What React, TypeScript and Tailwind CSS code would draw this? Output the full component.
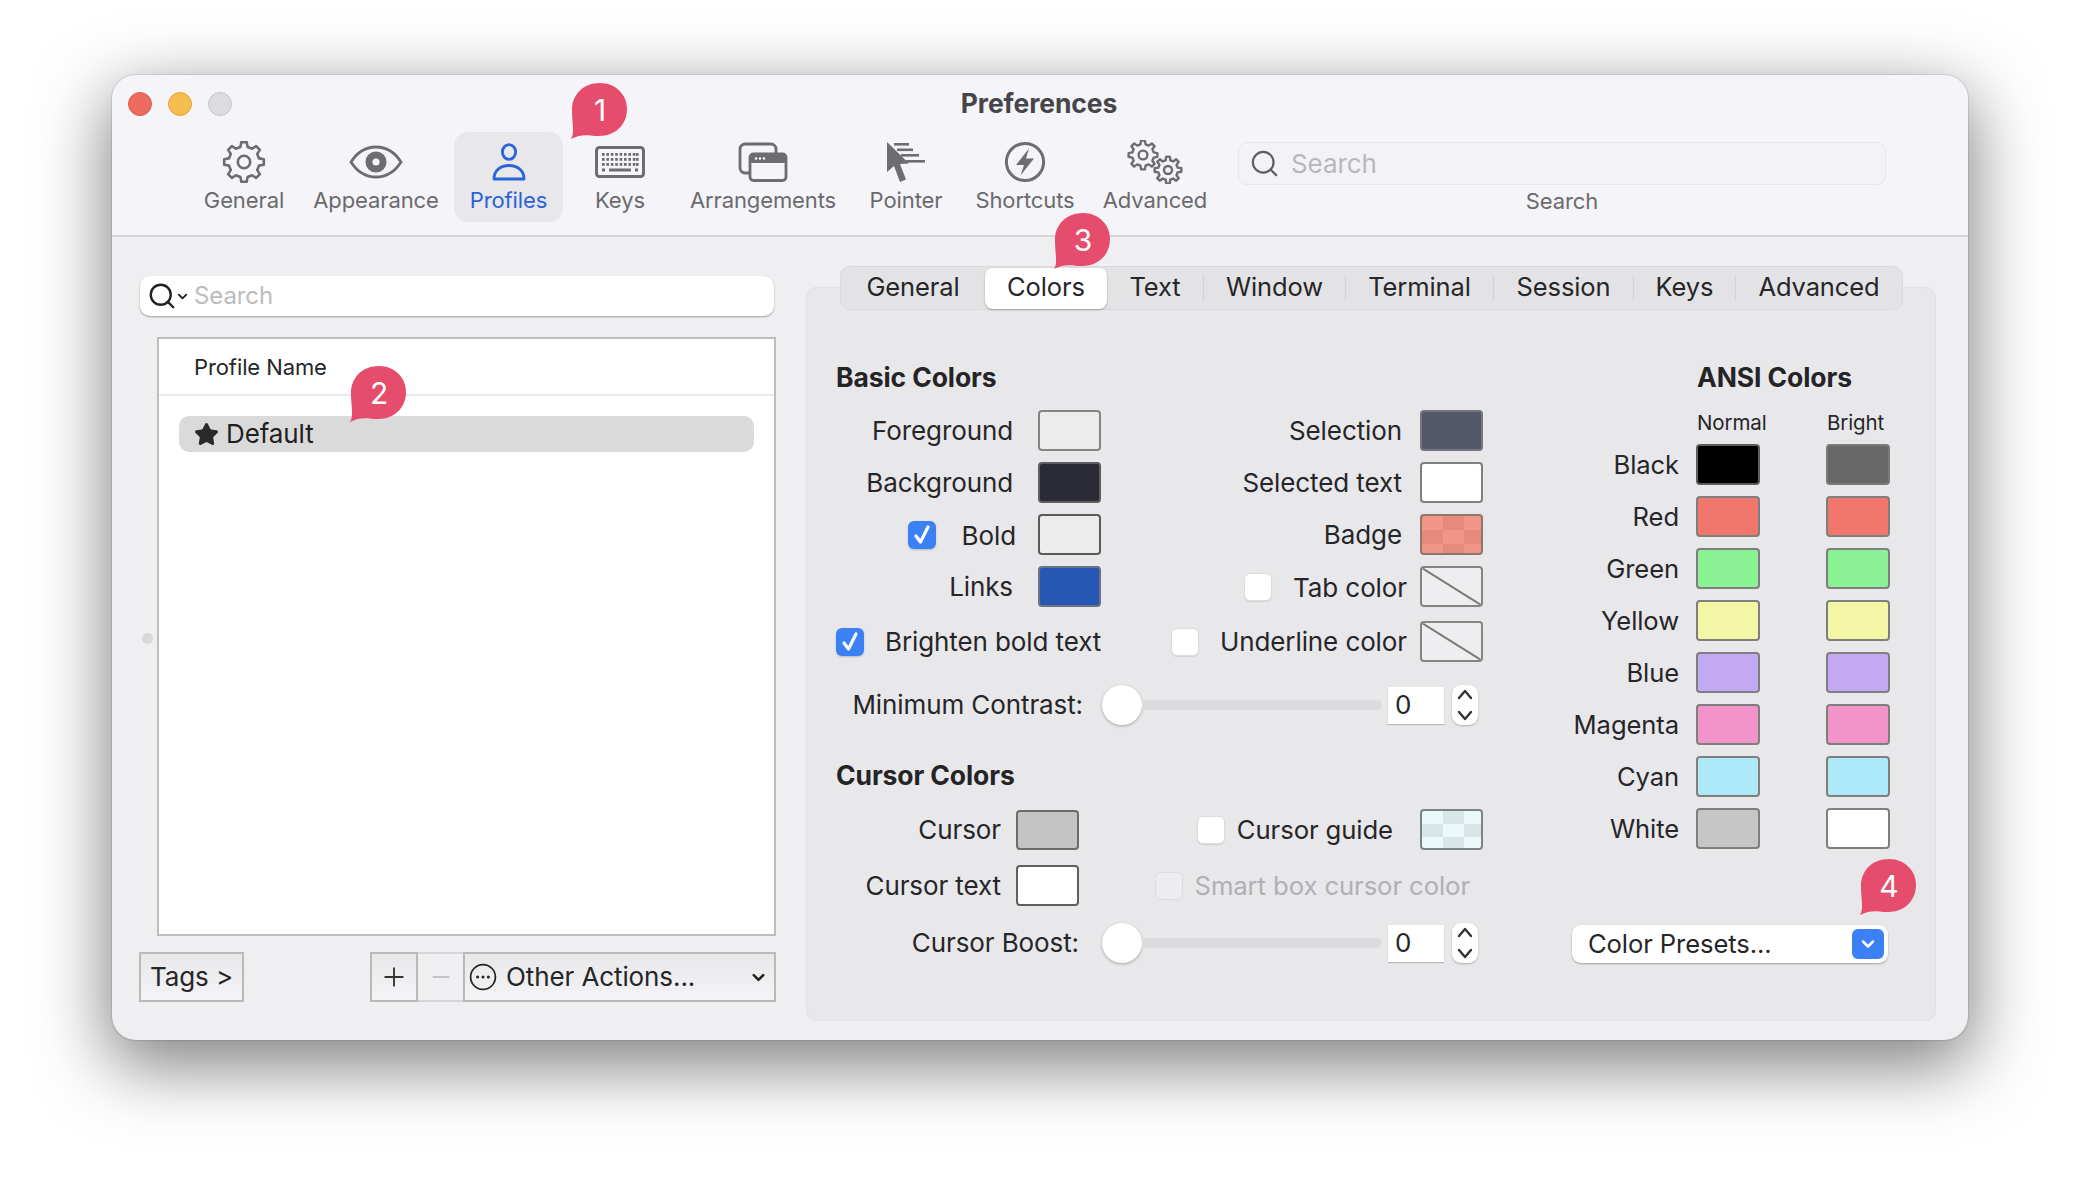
import React from "react";
import { ChevronDown, Minus, Plus, Search, Star } from "lucide-react";

function gearPath(cx: number, cy: number, R: number, r: number, n: number) {
  const pts: string[] = [];
  const step = (2 * Math.PI) / n;
  for (let i = 0; i < n; i++) {
    const a = i * step;
    const p = (rad: number, t: number) =>
      `${(cx + rad * Math.cos(t)).toFixed(2)} ${(cy + rad * Math.sin(t)).toFixed(2)}`;
    pts.push(p(r, a - step * 0.3), p(R, a - step * 0.17), p(R, a + step * 0.17), p(r, a + step * 0.3));
  }
  return "M" + pts.join("L") + "Z";
}

const GREY = "#6d6d70";

const GearIcon = () => (
  <svg width="44" height="42" viewBox="0 0 44 42" fill="none" stroke={GREY} strokeWidth="2.6" strokeLinejoin="round">
    <path d={gearPath(22, 21, 20, 15.5, 8)} />
    <circle cx="22" cy="21" r="6.2" />
  </svg>
);
const EyeIcon = () => (
  <svg width="54" height="34" viewBox="0 0 54 34" fill="none">
    <path d="M2 17C9 6 18 2 27 2C36 2 45 6 52 17C45 28 36 32 27 32C18 32 9 28 2 17Z" stroke={GREY} strokeWidth="2.8" />
    <circle cx="27" cy="17" r="10.5" fill={GREY} />
    <circle cx="27" cy="17" r="3.6" fill="#f5f4f8" />
  </svg>
);
const PersonIcon = () => (
  <svg width="34" height="38" viewBox="0 0 34 38" fill="none" stroke="#2b63d9" strokeWidth="2.8" strokeLinejoin="round">
    <ellipse cx="17" cy="9" rx="6.6" ry="7.4" />
    <path d="M2 36C2 27 9 22.5 17 22.5C25 22.5 32 27 32 36Z" />
  </svg>
);
const KeyboardIcon = () => (
  <svg width="50" height="32" viewBox="0 0 50 32" fill="none">
    <rect x="1.5" y="1.5" width="47" height="29" rx="3" stroke={GREY} strokeWidth="3" />
    {[7, 12, 17].map((y) =>
      [7, 11.4, 15.8, 20.2, 24.6, 29, 33.4, 37.8, 41].map((x) => (
        <rect key={`${x}-${y}`} x={x} y={y} width="2.6" height="2.8" fill={GREY} />
      )),
    )}
    <rect x="14" y="22.5" width="22" height="3" fill={GREY} />
    <rect x="7" y="22.5" width="3" height="3" fill={GREY} />
    <rect x="40" y="22.5" width="3" height="3" fill={GREY} />
  </svg>
);
const ArrangeIcon = () => (
  <svg width="50" height="40" viewBox="0 0 50 40" fill="none">
    <rect x="2" y="2" width="36" height="29" rx="5" stroke={GREY} strokeWidth="2.8" />
    <rect x="12" y="12" width="36" height="26.5" rx="3.5" fill="#f5f4f8" stroke={GREY} strokeWidth="2.8" />
    <path d="M12 15.5C12 13.5 13.5 12 15.5 12H44.5C46.5 12 48 13.5 48 15.5V21H12Z" fill={GREY} />
    <circle cx="18" cy="16.5" r="1.2" fill="#fff" />
    <circle cx="22" cy="16.5" r="1.2" fill="#fff" />
    <circle cx="26" cy="16.5" r="1.2" fill="#fff" />
  </svg>
);
const PointerIcon = () => (
  <svg width="40" height="42" viewBox="0 0 40 42" fill={GREY}>
    <path d="M1 1L1 31L8 25L14 41L20 38.5L14 23L23 22.5Z" />
    <rect x="8" y="2" width="15" height="2.6" />
    <rect x="11" y="7.5" width="16" height="2.6" />
    <rect x="15" y="13" width="18" height="2.6" />
    <rect x="20" y="19" width="19" height="2.6" />
  </svg>
);
const BoltIcon = () => (
  <svg width="42" height="42" viewBox="0 0 42 42" fill="none">
    <circle cx="21" cy="21" r="18.6" stroke={GREY} strokeWidth="3" />
    <path d="M25 7.5L12 24H20L16.5 34.5L30 17.5H22Z" fill={GREY} />
  </svg>
);
const GearsIcon = () => (
  <svg width="56" height="44" viewBox="0 0 56 44" fill="none" stroke={GREY} strokeWidth="2.4" strokeLinejoin="round">
    <path d={gearPath(16, 15, 14.5, 11, 8)} />
    <circle cx="16" cy="15" r="4.4" />
    <path d={gearPath(41, 30, 13.5, 10, 8)} />
    <circle cx="41" cy="30" r="4" />
  </svg>
);

const ToolItem = ({ label, icon, cls, active }: { label: string; icon: React.ReactNode; cls: string; active?: boolean }) => (
  <div
    className={`flex h-[90px] flex-col items-center ${cls} ${active ? "rounded-[14px] bg-[#e8e7ea] text-[#2b63d9]" : "text-[#6a6a6d]"}`}
  >
    <div className="flex h-[56px] items-center justify-center pt-1">{icon}</div>
    <div className="text-[22px] leading-[24px] whitespace-nowrap">{label}</div>
  </div>
);

const Bubble = ({ n, cls }: { n: string; cls: string }) => (
  <div className={`absolute flex h-[58px] w-[58px] items-center justify-center text-[30px] text-white ${cls}`}>
    <svg className="absolute inset-0" width="58" height="58" viewBox="0 0 58 58">
      <path
        d="M1 57C5 51 2 42 2 28C2 12 14 1 30 1C45 1 57 12 57 27C57 43 45 54 29 54C20 54 12 51 1 57Z"
        fill="#e64c6b"
      />
    </svg>
    <span className="relative ml-[2px] mb-[3px]">{n}</span>
  </div>
);

const Swatch = ({ cls, w = "w-[63px]", h = "h-[41px]", none }: { cls: string; w?: string; h?: string; none?: boolean }) => (
  <div className={`relative shrink-0 overflow-hidden rounded-[4px] border-2 ${w} ${h} ${cls}`}>
    {none && (
      <svg className="h-full w-full" viewBox="0 0 100 100" preserveAspectRatio="none">
        <line x1="0" y1="0" x2="100" y2="100" stroke="#7c7c7c" strokeWidth="2" vectorEffect="non-scaling-stroke" />
      </svg>
    )}
  </div>
);

const Check = ({ on, disabled }: { on?: boolean; disabled?: boolean }) =>
  on ? (
    <div className="flex h-[28px] w-[28px] shrink-0 items-center justify-center rounded-[6px] bg-[#3b80f5] shadow-[0_1px_2px_rgba(0,0,0,0.2)]">
      <svg width="18" height="21" viewBox="0 0 18 21" fill="none" stroke="#fff" strokeWidth="3.2" strokeLinecap="round" strokeLinejoin="round">
        <path d="M3 12L7.5 18L15 3" />
      </svg>
    </div>
  ) : (
    <div
      className={`h-[28px] w-[28px] shrink-0 rounded-[6px] border ${disabled ? "border-[#dddddf] bg-[#edecef]" : "border-[#dcdcdc] bg-white shadow-[0_1px_1px_rgba(0,0,0,0.1)]"}`}
    />
  );

const Stepper = () => (
  <div className="ml-[8px] flex h-[40px] w-[26px] shrink-0 flex-col items-center justify-between rounded-[9px] bg-white py-[4px] shadow-[0_1px_2px_rgba(0,0,0,0.25)]">
    <svg width="16" height="11" viewBox="0 0 16 11" fill="none" stroke="#333" strokeWidth="2.4" strokeLinecap="round" strokeLinejoin="round">
      <path d="M2 9L8 2L14 9" />
    </svg>
    <svg width="16" height="11" viewBox="0 0 16 11" fill="none" stroke="#333" strokeWidth="2.4" strokeLinecap="round" strokeLinejoin="round">
      <path d="M2 2L8 9L14 2" />
    </svg>
  </div>
);

const SliderRow = ({ label, cls, labelCls }: { label: string; cls: string; labelCls: string }) => (
  <div className={`flex h-[40px] items-center ${cls}`}>
    <div className={`shrink-0 text-right whitespace-nowrap ${labelCls}`}>{label}</div>
    <div className="h-[40px] w-[40px] shrink-0 rounded-full bg-white shadow-[0_1px_3px_rgba(0,0,0,0.3)]" />
    <div className="h-[10px] w-[240px] rounded-r-full bg-[#dcdbde]" />
    <div className="ml-[6px] flex h-[37px] w-[56px] items-center bg-white pl-[7px] shadow-[0_1px_1px_rgba(0,0,0,0.2)]">0</div>
    <Stepper />
  </div>
);

const ansi: [string, string, string][] = [
  ["Black", "bg-black border-[#5c5c5c]", "bg-[#686868] border-[#7a7a7a]"],
  ["Red", "bg-[#f1776c] border-[#7f7f7f]", "bg-[#f1776c] border-[#7f7f7f]"],
  ["Green", "bg-[#8af295] border-[#7f7f7f]", "bg-[#8af295] border-[#7f7f7f]"],
  ["Yellow", "bg-[#f3f6a5] border-[#7f7f7f]", "bg-[#f3f6a5] border-[#7f7f7f]"],
  ["Blue", "bg-[#c3a9f1] border-[#7f7f7f]", "bg-[#c3a9f1] border-[#7f7f7f]"],
  ["Magenta", "bg-[#f294c9] border-[#7f7f7f]", "bg-[#f294c9] border-[#7f7f7f]"],
  ["Cyan", "bg-[#ade9f9] border-[#7f7f7f]", "bg-[#ade9f9] border-[#7f7f7f]"],
  ["White", "bg-[#c6c6c6] border-[#7f7f7f]", "bg-white border-[#7f7f7f]"],
];

const tabs: [string, string, boolean][] = [
  ["General", "w-[144px]", false],
  ["Colors", "w-[122px]", false],
  ["Text", "w-[97px]", true],
  ["Window", "w-[142px]", true],
  ["Terminal", "w-[148px]", true],
  ["Session", "w-[140px]", true],
  ["Keys", "w-[102px]", true],
  ["Advanced", "w-[166px]", false],
];

const Sep = "border-r border-[#d2d1d4]";

export default function App() {
  return (
    <div className="relative h-[1188px] w-[2080px] overflow-hidden bg-white pt-[75px] pl-[112px] font-[family-name:Inter,sans-serif] text-[26px] leading-[30px] text-[#262628] tracking-[-0.1px]">
      <div className="flex h-[965px] w-[1856px] flex-col overflow-hidden rounded-[24px] bg-[#efeef1] shadow-[0_22px_70px_4px_rgba(0,0,0,0.5),0_0_2px_rgba(0,0,0,0.35)]">
        {/* toolbar */}
        <div className="h-[162px] shrink-0 border-b-2 border-[#d6d5d8] bg-[#f5f4f8]">
          <div className="flex h-[57px] items-center">
            <div className="flex flex-1 gap-[16px] pl-[16px]">
              <div className="h-[24px] w-[24px] rounded-full border border-[#dc5a4c] bg-[#ee6a5e]" />
              <div className="h-[24px] w-[24px] rounded-full border border-[#dea533] bg-[#f5bd4f]" />
              <div className="h-[24px] w-[24px] rounded-full border border-[#c6c6ca] bg-[#dcdbdf]" />
            </div>
            <div className="mt-[-2px] mr-[18px] text-[26.5px] font-bold text-[#46464a]">Preferences</div>
            <div className="flex-1" />
          </div>
          <div className="flex pl-[78px]">
            <ToolItem label="General" icon={<GearIcon />} cls="w-[108px]" />
            <ToolItem label="Appearance" icon={<EyeIcon />} cls="w-[156px]" />
            <ToolItem label="Profiles" icon={<PersonIcon />} cls="w-[109px]" active />
            <ToolItem label="Keys" icon={<KeyboardIcon />} cls="w-[114px]" />
            <ToolItem label="Arrangements" icon={<ArrangeIcon />} cls="w-[172px]" />
            <ToolItem label="Pointer" icon={<PointerIcon />} cls="w-[114px]" />
            <ToolItem label="Shortcuts" icon={<BoltIcon />} cls="w-[124px]" />
            <ToolItem label="Advanced" icon={<GearsIcon />} cls="w-[136px]" />
            <div className="ml-[15px] flex w-[648px] flex-col items-center pt-[10px]">
              <div className="flex h-[43px] w-full items-center gap-[11px] rounded-[9px] border border-[#e7e6ea] bg-[#f3f2f6] pl-[10px] text-[#b8b8bb]">
                <Search size={31} strokeWidth={1.7} color="#5f5f62" />
                <span>Search</span>
              </div>
              <div className="mt-[4px] text-[22px] leading-[24px] text-[#6a6a6d]">Search</div>
            </div>
          </div>
        </div>

        {/* body */}
        <div className="flex flex-1">
          {/* left */}
          <div className="relative w-[694px] shrink-0 pt-[39px] pl-[27px]">
            <div className="ml-[1px] flex h-[40px] w-[634px] items-center rounded-[10px] bg-white pl-[7px] text-[24px] text-[#bcbcbe] shadow-[0_1px_2px_rgba(0,0,0,0.35)]">
              <Search size={30} strokeWidth={1.9} color="#222" />
              <ChevronDown size={15} strokeWidth={3} color="#222" className="mr-[4px] ml-[-2px]" />
              <span>Search</span>
            </div>
            <div className="mt-[21px] ml-[18px] h-[599px] w-[619px] border-2 border-[#bdbdbd] bg-white">
              <div className="flex h-[57px] items-center border-b-2 border-[#e9e9e9] pl-[35px] text-[22px]">Profile Name</div>
              <div className="mx-[20px] mt-[20px] flex h-[36px] w-[575px] items-center gap-[7px] rounded-[10px] bg-[#dadada] pl-[15px] text-[#1f1f1f]">
                <Star size={25} fill="#2a2a2a" color="#2a2a2a" />
                <span>Default</span>
              </div>
            </div>
            <div className="absolute top-[396px] left-[30px] h-[11px] w-[11px] rounded-full bg-[#d8d8da]" />
            <div className="mt-[16px] flex h-[50px] w-[637px] items-stretch">
              <div className="flex w-[105px] items-center justify-center border-2 border-[#b9b9b9] bg-gradient-to-b from-[#e8e8ea] to-[#f4f4f6]">
                Tags &gt;
              </div>
              <div className="ml-[126px] flex w-[48px] items-center justify-center border-2 border-[#b9b9b9] bg-gradient-to-b from-[#e8e8ea] to-[#f4f4f6]">
                <Plus size={30} strokeWidth={1.5} color="#333" />
              </div>
              <div className="flex w-[45px] items-center justify-center border-y-2 border-[#d6d6d8]">
                <Minus size={26} strokeWidth={1.6} color="#b4b4b6" />
              </div>
              <div className="flex flex-1 items-center border-2 border-[#b9b9b9] bg-gradient-to-b from-[#e8e8ea] to-[#f4f4f6] pr-[6px] pl-[4px]">
                <svg width="28" height="28" viewBox="0 0 28 28" fill="none" className="mr-[9px] shrink-0">
                  <circle cx="14" cy="14" r="12.4" stroke="#222" strokeWidth="1.7" />
                  <circle cx="8.6" cy="14" r="1.5" fill="#222" />
                  <circle cx="14" cy="14" r="1.5" fill="#222" />
                  <circle cx="19.4" cy="14" r="1.5" fill="#222" />
                </svg>
                <span className="flex-1 whitespace-nowrap">Other Actions...</span>
                <ChevronDown size={19} strokeWidth={3.2} color="#222" />
              </div>
            </div>
          </div>

          {/* right */}
          <div className="mt-[50px] flex h-[734px] w-[1130px] shrink-0 flex-col rounded-[10px] border border-[#e2e1e4] bg-[#e8e7ea]">
            <div className="mt-[-22px] ml-[33px] flex h-[44px] w-[1063px] items-center rounded-[10px] border border-[#d9d8db] bg-[#e3e2e5] text-[25.5px]">
              {tabs.map(([t, w, sep]) =>
                t === "Colors" ? (
                  <div
                    key={t}
                    className={`flex h-[41px] ${w} items-center justify-center rounded-[8px] bg-white pb-[2px] shadow-[0_1px_2px_rgba(0,0,0,0.3)]`}
                  >
                    {t}
                  </div>
                ) : (
                  <div key={t} className={`flex h-[41px] ${w} items-center`}>
                    <div className={`flex h-[26px] w-full items-center justify-center pb-[2px] ${sep ? Sep : ""}`}>{t}</div>
                  </div>
                ),
              )}
            </div>

            <div className="mt-[52px] ml-[29px] flex">
              {/* basic + cursor */}
              <div className="w-[647px] shrink-0">
                <div className="text-[26.5px] font-bold text-[#242426]">Basic Colors</div>
                <div className="mt-[18px] flex flex-col gap-[11px]">
                  <div className="flex h-[41px]">
                    <div className="flex w-[265px] items-center justify-end gap-[25px]">
                      Foreground
                      <Swatch cls="border-[#848484] bg-[#ececec]" />
                    </div>
                    <div className="flex flex-1 items-center justify-end gap-[18px]">
                      Selection
                      <Swatch cls="border-[#74767f] bg-[#535768]" />
                    </div>
                  </div>
                  <div className="flex h-[41px]">
                    <div className="flex w-[265px] items-center justify-end gap-[25px]">
                      Background
                      <Swatch cls="border-[#5e5e60] bg-[#2a2b34]" />
                    </div>
                    <div className="flex flex-1 items-center justify-end gap-[18px]">
                      Selected text
                      <Swatch cls="border-[#7f7f7f] bg-white" />
                    </div>
                  </div>
                  <div className="flex h-[41px]">
                    <div className="flex w-[265px] items-center justify-end">
                      <Check on />
                      <span className="mt-[2px] mr-[22px] ml-[26px]">Bold</span>
                      <Swatch cls="border-[#5a5a5a] bg-[#ececec]" />
                    </div>
                    <div className="flex flex-1 items-center justify-end gap-[18px]">
                      Badge
                      <Swatch
                        cls="border-[#8c7672] bg-[image:repeating-conic-gradient(#e58b7c_0%_25%,#ef9686_0%_50%)] bg-[length:42px_28px]"
                      />
                    </div>
                  </div>
                  <div className="flex h-[41px]">
                    <div className="flex w-[265px] items-center justify-end gap-[25px]">
                      Links
                      <Swatch cls="border-[#6d7383] bg-[#2657b4]" />
                    </div>
                    <div className="flex flex-1 items-center justify-end">
                      <Check />
                      <span className="mt-[2px] mr-[13px] ml-[21px]">Tab color</span>
                      <Swatch cls="border-[#848484] bg-[#eeedf0]" none />
                    </div>
                  </div>
                </div>
                <div className="mt-[14px] flex h-[41px]">
                  <div className="flex w-[265px] items-center gap-[21px] whitespace-nowrap">
                    <Check on />
                    Brighten bold text
                  </div>
                  <div className="flex flex-1 items-center justify-end">
                    <Check />
                    <span className="mr-[13px] ml-[21px]">Underline color</span>
                    <Swatch cls="border-[#848484] bg-[#eeedf0]" none />
                  </div>
                </div>
                <SliderRow label="Minimum Contrast:" cls="mt-[23px]" labelCls="w-[247px] mr-[19px]" />

                <div className="mt-[35px] text-[26.5px] font-bold text-[#242426]">Cursor Colors</div>
                <div className="mt-[19px] flex h-[41px]">
                  <div className="flex w-[243px] items-center justify-end gap-[15px]">
                    <span>Cursor</span>
                    <Swatch cls="border-[#6c6c6c] bg-[#c4c4c4]" h="h-[40px]" />
                  </div>
                  <div className="flex flex-1 items-center justify-end">
                    <Check />
                    <span className="mr-[27px] ml-[12px] text-[25.7px]">Cursor guide</span>
                    <Swatch cls="border-[#7b8384] bg-[image:repeating-conic-gradient(#d9e6e7_0%_25%,#ecf8fa_0%_50%)] bg-[length:42px_26px]" />
                  </div>
                </div>
                <div className="mt-[15px] flex h-[41px]">
                  <div className="flex w-[243px] items-center justify-end gap-[15px]">
                    Cursor text
                    <Swatch cls="border-[#5f5f5f] bg-white" />
                  </div>
                  <div className="flex flex-1 items-center justify-end pr-[13px]">
                    <Check disabled />
                    <span className="ml-[12px] text-[25.7px] text-[#b0b0b3]">Smart box cursor color</span>
                  </div>
                </div>
                <SliderRow label="Cursor Boost:" cls="mt-[17px]" labelCls="w-[243px] mr-[23px]" />
              </div>

              {/* ansi */}
              <div className="ml-[89px] w-[320px] shrink-0">
                <div className="ml-[125px] text-[26.5px] font-bold whitespace-nowrap text-[#242426]">ANSI Colors</div>
                <div className="mt-[21px] flex h-[20px] items-center text-[20.5px] leading-[20px]">
                  <div className="ml-[125px] w-[130px]">Normal</div>
                  <div>Bright</div>
                </div>
                <div className="mt-[11px] flex flex-col gap-[11px] text-[25.6px]">
                  {ansi.map(([n, a, b]) => (
                    <div key={n} className="flex h-[41px] items-center">
                      <div className="mr-[17px] w-[107px] text-right">{n}</div>
                      <Swatch cls={a} w="w-[64px]" />
                      <div className="w-[66px]" />
                      <Swatch cls={b} w="w-[64px]" />
                    </div>
                  ))}
                </div>
                <div className="mt-[76px] flex h-[38px] w-[316px] items-center justify-between rounded-[9px] bg-white pr-[4px] pl-[16px] text-[25.6px] shadow-[0_1px_2px_rgba(0,0,0,0.3)]">
                  <span className="pb-[1px]">Color Presets...</span>
                  <div className="flex h-[30px] w-[32px] items-center justify-center rounded-[6px] bg-[#3b80f5]">
                    <ChevronDown size={20} strokeWidth={3} color="#fff" />
                  </div>
                </div>
              </div>
            </div>
          </div>
        </div>
      </div>

      <Bubble n="1" cls="top-[82px] left-[570px]" />
      <Bubble n="2" cls="top-[365px] left-[349px]" />
      <Bubble n="3" cls="top-[212px] left-[1053px]" />
      <Bubble n="4" cls="top-[858px] left-[1859px]" />
    </div>
  );
}
